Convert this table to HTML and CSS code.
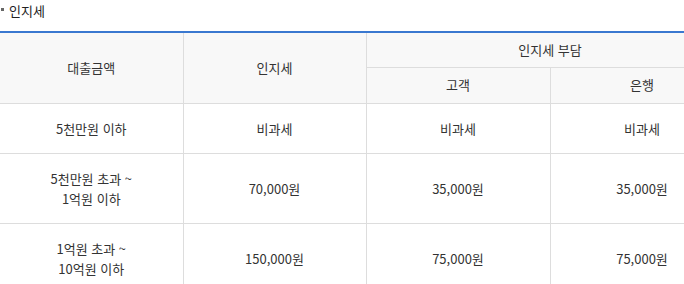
FILE: index.html
```html
<!DOCTYPE html>
<html lang="ko">
<head>
<meta charset="utf-8">
<title>인지세</title>
<link rel="stylesheet" href="styles.css">
</head>
<body>
<h3 class="title"><span class="bullet"></span>인지세</h3>
<div class="table-wrap">
<table class="tax-table">
  <colgroup>
    <col class="c1"><col class="c2"><col class="c3"><col class="c4">
  </colgroup>
  <thead>
    <tr>
      <th rowspan="2">대출금액</th>
      <th rowspan="2">인지세</th>
      <th colspan="2" class="top">인지세 부담</th>
    </tr>
    <tr>
      <th class="sub">고객</th>
      <th class="sub">은행</th>
    </tr>
  </thead>
  <tbody>
    <tr>
      <td>5천만원 이하</td>
      <td>비과세</td>
      <td>비과세</td>
      <td>비과세</td>
    </tr>
    <tr>
      <td>5천만원 초과 ~<br>1억원 이하</td>
      <td>70,000원</td>
      <td>35,000원</td>
      <td>35,000원</td>
    </tr>
    <tr>
      <td>1억원 초과 ~<br>10억원 이하</td>
      <td>150,000원</td>
      <td>75,000원</td>
      <td>75,000원</td>
    </tr>
  </tbody>
</table>
</div>
</body>
</html>
```

FILE: styles.css
```css
html, body {
  margin: 0;
  padding: 0;
  overflow: hidden;
  background: #fff;
}
body {
  font-family: "Noto Sans CJK KR", "Noto Sans", sans-serif;
  font-size: 13px;
  color: #333;
}
.title {
  margin: 0 0 9px 0;
  padding: 1px 0 0 1px;
  font-size: 13px;
  font-weight: normal;
  line-height: 20px;
  height: 22px;
  box-sizing: border-box;
  display: flex;
  align-items: flex-start;
  color: #222;
}
.bullet {
  display: inline-block;
  width: 3px;
  height: 3px;
  background: #666;
  margin: 7px 5px 0 0;
}
.table-wrap {
  width: 100%;
  overflow: hidden;
}
.tax-table {
  width: 734px;
  border-collapse: collapse;
  border-top: 2px solid #3a78d0;
  table-layout: fixed;
}
.c1 { width: 183px; }
.c2 { width: 183px; }
.c3 { width: 184px; }
.c4 { width: 184px; }
.tax-table th,
.tax-table td {
  border: 1px solid #ddd;
  text-align: center;
  line-height: 20px;
  font-weight: normal;
}
.tax-table tr > :first-child { border-left: none; }
.tax-table th {
  background: #f8f8f8;
  color: #333;
  padding: 7px 10px 7px;
}
.tax-table th.sub {
  padding: 7px 10px 8px;
}
.tax-table td {
  padding: 15px 10px 14px;
}
```
